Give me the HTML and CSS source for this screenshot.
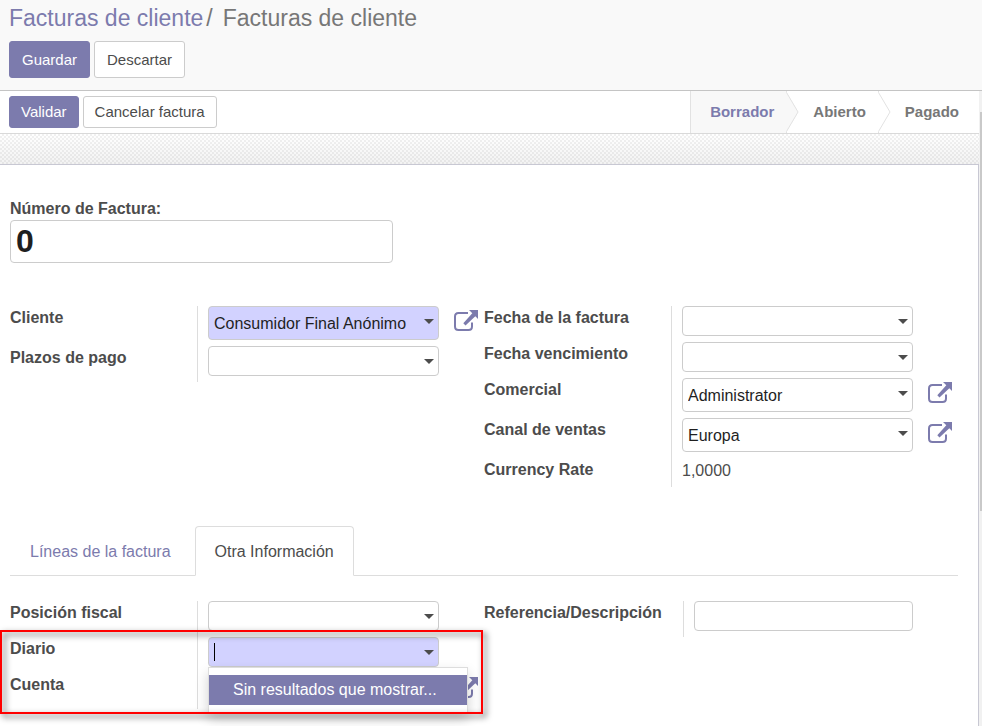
FILE: index.html
```html
<!DOCTYPE html>
<html lang="es">
<head>
<meta charset="utf-8">
<title>Facturas de cliente</title>
<link rel="stylesheet" href="styles.css">
</head>
<body>
<svg class="defs" aria-hidden="true">
  <symbol id="ext" viewBox="0 0 24 22">
    <path d="M14 3H4.500Q1 3 1 6.500V16.500Q1 20 4.500 20H14.500Q18 20 18 16.500V12.500" fill="none" stroke="currentColor" stroke-width="2"/>
    <path d="M15 0H24V9L21.300 6.300L11.500 15.500L9.300 13.300L18.300 3.300Z" fill="currentColor"/>
  </symbol>
  <symbol id="chevron" viewBox="0 0 13 42">
    <path class="chevron-fill" d="M0 0L12.500 21L0 42Z"/>
    <path d="M.5 0V1.500L12 21L.5 40.500V42" fill="none" stroke="#e2e2e2"/>
  </symbol>
</svg>
<header class="control-panel">
  <h1 class="breadcrumb"><a href="#">Facturas de cliente</a><span class="sep">/</span><span>Facturas de cliente</span></h1>
  <div class="buttons">
    <button class="btn primary">Guardar</button>
    <button class="btn">Descartar</button>
  </div>
</header>
<div class="content">
  <main class="view">
    <div class="statusbar">
      <div class="buttons">
        <button class="btn small primary">Validar</button>
        <button class="btn small">Cancelar factura</button>
      </div>
      <ol class="steps">
        <li class="step active">Borrador<svg class="chevron"><use href="#chevron"/></svg></li>
        <li class="step">Abierto<svg class="chevron"><use href="#chevron"/></svg></li>
        <li class="step">Pagado</li>
      </ol>
    </div>
    <div class="backdrop"></div>
    <section class="sheet">
      <div class="number">
        <label for="numero">Número de Factura:</label>
        <input id="numero" type="text" value="0">
      </div>
      <div class="groups">
        <div class="group">
          <label for="cliente">Cliente</label>
          <div class="field">
            <div class="control"><select id="cliente" class="tall required"><option>Consumidor Final Anónimo</option></select></div>
            <button class="open" aria-label="Abrir cliente"><svg><use href="#ext"/></svg></button>
          </div>
          <label for="plazos">Plazos de pago</label>
          <div class="field">
            <div class="control"><select id="plazos"><option></option></select></div>
          </div>
        </div>
        <div class="group">
          <label for="fecha">Fecha de la factura</label>
          <div class="field">
            <div class="control"><input id="fecha" type="text"></div>
          </div>
          <label for="vencimiento">Fecha vencimiento</label>
          <div class="field">
            <div class="control"><input id="vencimiento" type="text"></div>
          </div>
          <label for="comercial">Comercial</label>
          <div class="field">
            <div class="control"><select id="comercial" class="tall"><option>Administrator</option></select></div>
            <button class="open" aria-label="Abrir comercial"><svg><use href="#ext"/></svg></button>
          </div>
          <label for="canal">Canal de ventas</label>
          <div class="field">
            <div class="control"><select id="canal" class="tall"><option>Europa</option></select></div>
            <button class="open" aria-label="Abrir canal"><svg><use href="#ext"/></svg></button>
          </div>
          <span class="label">Currency Rate</span>
          <div class="field"><span class="value">1,0000</span></div>
        </div>
      </div>
      <nav class="tabs">
        <a class="tab" href="#">Líneas de la factura</a>
        <a class="tab active" href="#">Otra Información</a>
      </nav>
      <div class="groups page">
        <div class="group">
          <label for="posicion">Posición fiscal</label>
          <div class="field">
            <div class="control"><select id="posicion"><option></option></select></div>
          </div>
          <label for="diario">Diario</label>
          <div class="field">
            <div class="control">
              <input id="diario" class="required" type="text" role="combobox" aria-expanded="true" aria-controls="resultados">
              <span class="cursor"></span>
              <ul id="resultados" class="menu" role="listbox">
                <li role="option" aria-selected="true">Sin resultados que mostrar...</li>
              </ul>
            </div>
          </div>
          <label for="cuenta">Cuenta</label>
          <div class="field">
            <div class="control"><select id="cuenta" class="required"><option></option></select></div>
            <button class="open" aria-label="Abrir cuenta"><svg><use href="#ext"/></svg></button>
          </div>
        </div>
        <div class="group wide-label">
          <label for="referencia">Referencia/Descripción</label>
          <div class="field">
            <div class="control plain"><input id="referencia" type="text"></div>
          </div>
        </div>
        <div class="highlight"></div>
      </div>
    </section>
  </main>
  <div class="scrollbar"><div class="thumb"></div></div>
</div>
</body>
</html>
```
FILE: styles.css
```css
* { box-sizing: border-box; }
html, body { height: 100%; }
body {
  margin: 0;
  display: flex;
  flex-direction: column;
  overflow: hidden;
  background: #fff;
  color: #4c4c4c;
  font: 16px/22px "Liberation Sans", Arial, sans-serif;
}
a { color: #7c7bad; text-decoration: none; }
input, select, button { font: inherit; margin: 0; }
.defs { position: absolute; width: 0; height: 0; }

.control-panel {
  flex: none;
  padding: 4px 9px 12px;
  background: #f9f9f9;
  border-bottom: 1px solid #c4c4c4;
}
.breadcrumb {
  margin: 0 0 9px;
  color: #777;
  font-size: 23px;
  font-weight: normal;
  line-height: 28px;
}
.breadcrumb .sep { margin: 0 10px 0 3px; }
.buttons { display: flex; gap: 4px; }
.btn {
  height: 37px;
  padding: 0 12px;
  border: 1px solid #ccc;
  border-radius: 3px;
  background: #fff;
  color: #4c4c4c;
  font-size: 15px;
}
.btn.small { height: 32px; padding: 0 11px; }
.btn.primary { background: #7c7bad; border-color: #7c7bad; color: #fff; }

.content { flex: 1; min-height: 0; display: flex; }
.view { flex: 1; min-width: 0; display: flex; flex-direction: column; }
.scrollbar { flex: none; width: 3px; padding: 21px 0 0 1px; background: #f1f1f1; }
.thumb { height: 65%; background: #c9c9c9; }

.statusbar {
  flex: none;
  display: flex;
  justify-content: space-between;
  height: 43px;
  padding-left: 9px;
  border-bottom: 1px solid #d9d9d9;
}
.statusbar .buttons { align-items: center; }
.steps { display: flex; margin: 0; padding: 0; list-style: none; border-left: 1px solid #e2e2e2; }
.step {
  position: relative;
  padding: 0 12px 0 27px;
  color: #777;
  font-size: 15px;
  font-weight: bold;
  line-height: 42px;
}
.step:last-child { padding-right: 20px; }
.step.active { padding-left: 19px; background: #f8f8f8; color: #7c7bad; }
.chevron { position: absolute; z-index: 1; top: 0; left: 100%; width: 13px; height: 42px; fill: #fff; }
.active .chevron { fill: #f8f8f8; }

.backdrop {
  flex: none;
  height: 30px;
  background:
    linear-gradient(rgba(0, 0, 0, 0), rgba(0, 0, 0, .05)),
    repeating-conic-gradient(#f1f1f1 0 25%, #fff 0 50%) 0 0 / 4px 4px;
}
.sheet {
  flex: 1;
  padding: 33px 20px 0 10px;
  border: 1px solid #c8c8d3;
  border-width: 1px 1px 0 0;
}
label, .label { font-weight: bold; }

input, select {
  display: block;
  width: 100%;
  height: 30px;
  padding: 0 5px;
  border: 1px solid #ccc;
  border-radius: 4px;
  background: #fff;
  color: #1f1f1f;
  appearance: none;
  outline: none;
}
select.tall { height: 34px; padding-top: 2px; }
.required { background: #d2d2ff; }

.number { width: 383px; max-width: 100%; }
.number input { height: 43px; font-size: 32px; font-weight: bold; }

.groups { display: grid; grid-template-columns: 1fr 1fr; align-items: start; margin-top: 43px; }
.page { position: relative; margin-top: 25px; }
.group { display: grid; grid-template-columns: 187px 1fr; }
.group label, .group .label { padding-top: 1px; }
.wide-label { grid-template-columns: 199px 1fr; }
.field {
  display: flex;
  align-items: flex-start;
  min-height: 29px;
  padding: 0 6px 6px 10px;
  border-left: 1px solid #ddd;
}
.value { line-height: 26px; }
.group .field:has(.value) { padding-bottom: 3px; }
.control { position: relative; flex: 1; margin-right: 39px; }
.control:not(.plain)::after {
  content: "";
  position: absolute;
  top: 13px;
  right: 5px;
  border: 5px solid transparent;
  border-top-color: #4c4c4c;
  border-bottom: 0;
  pointer-events: none;
}
.field:has(.open) .control { margin-right: 15px; }
.open { height: 22px; padding: 0; margin-top: 4px; border: 0; background: none; color: #7c7bad; }
.open svg { display: block; width: 24px; height: 22px; }

.tabs { display: flex; margin-top: 39px; border-bottom: 1px solid #ddd; }
.tab { padding: 14px 19px 12px; margin-bottom: -1px; border: 1px solid transparent; border-radius: 4px 4px 0 0; }
.tab.active { margin-left: 4px; background: #fff; border-color: #ddd #ddd #fff; color: #4c4c4c; }

.cursor { position: absolute; top: 6px; left: 6px; width: 1px; height: 18px; background: #000; }
.menu {
  position: absolute;
  z-index: 2;
  top: 30px;
  left: 0;
  width: 260px;
  margin: 0;
  padding: 7px 0;
  border: 1px solid #ddd;
  background: #fff;
  box-shadow: 0 6px 12px rgba(0, 0, 0, .18);
  list-style: none;
}
.menu li { padding: 4px 24px; background: #7c7bad; color: #fff; white-space: nowrap; }
.highlight {
  position: absolute;
  z-index: 3;
  top: 29px;
  left: -10px;
  width: 483px;
  height: 84px;
  border: 2px solid #f00;
  filter: drop-shadow(3px 3px 3px rgba(0, 0, 0, .7));
  pointer-events: none;
}
```
